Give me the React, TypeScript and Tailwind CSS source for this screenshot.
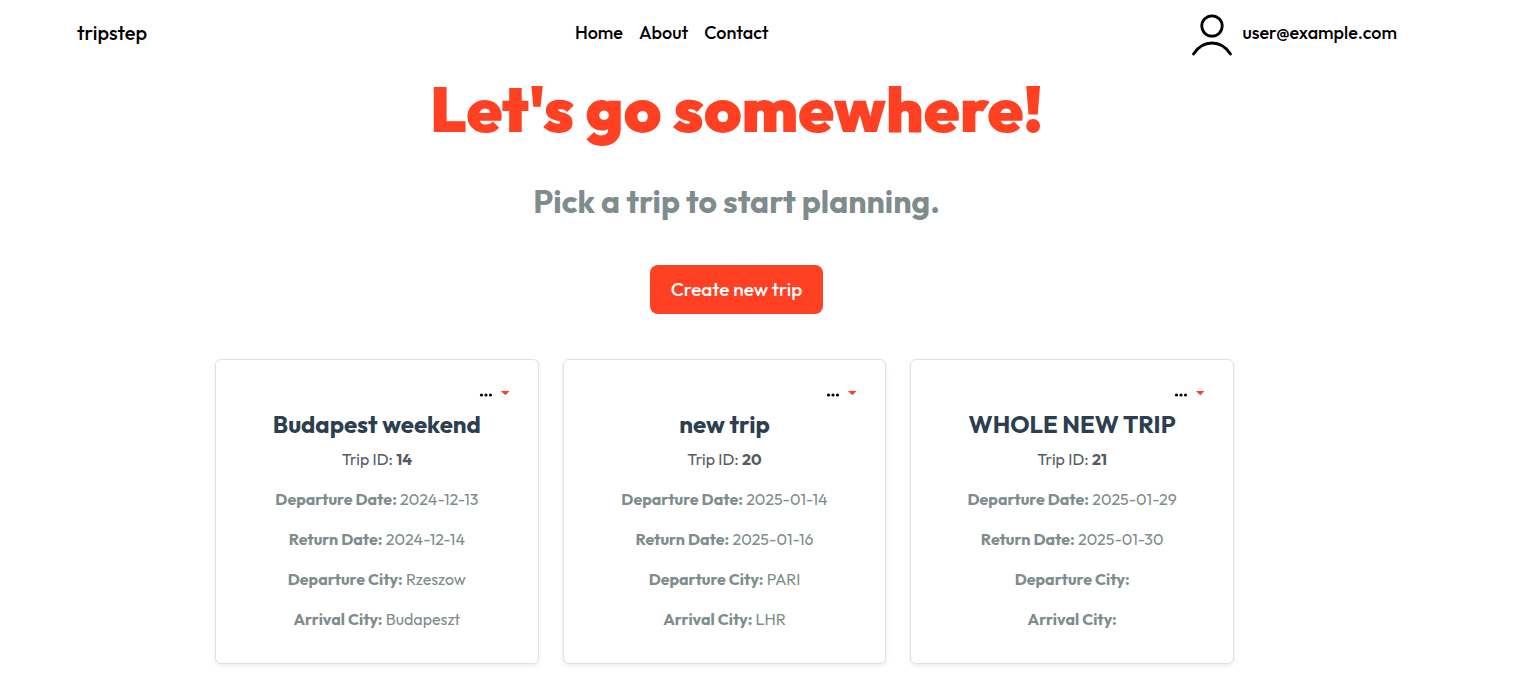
import React from "react";

type Trip = {
  id: number;
  name: string;
  departureDate: string;
  returnDate: string;
  departureCity: string;
  arrivalCity: string;
};

const trips: Trip[] = [
  { id: 14, name: "Budapest weekend", departureDate: "2024-12-13", returnDate: "2024-12-14", departureCity: "Rzeszow", arrivalCity: "Budapeszt" },
  { id: 20, name: "new trip", departureDate: "2025-01-14", returnDate: "2025-01-16", departureCity: "PARI", arrivalCity: "LHR" },
  { id: 21, name: "WHOLE NEW TRIP", departureDate: "2025-01-29", returnDate: "2025-01-30", departureCity: "", arrivalCity: "" },
];

function Detail({ label, value }: { label: string; value: string }) {
  return (
    <p className="mt-4 text-base leading-6 text-[#7f8c8d]">
      <strong className="font-bold">{label}:</strong> {value}
    </p>
  );
}

function TripCard({ trip }: { trip: Trip }) {
  return (
    <article className="rounded-md border border-[#dee2e6] bg-white px-4 pt-4 pb-8 text-center shadow-[0_2px_4px_rgba(0,0,0,0.075)]">
      <div className="flex h-8 justify-end pr-3">
        <button type="button" aria-label={`Options for ${trip.name}`} className="flex items-center gap-2 pt-0.5">
          <svg className="mt-1" width="14" height="4" viewBox="0 0 14 4" fill="#000">
            <circle cx="2.5" cy="2" r="1.6" />
            <circle cx="7" cy="2" r="1.6" />
            <circle cx="11.5" cy="2" r="1.6" />
          </svg>
          <svg width="9" height="5" viewBox="0 0 9 5" fill="#ff4023">
            <path d="M0 0h8.6L4.3 4.3z" />
          </svg>
        </button>
      </div>
      <h2 className="text-2xl leading-8 font-bold text-[#2c3e50]">{trip.name}</h2>
      <p className="mt-[7px] text-base leading-6 text-[#555b62]">
        Trip ID: <strong className="font-bold">{trip.id}</strong>
      </p>
      <Detail label="Departure Date" value={trip.departureDate} />
      <Detail label="Return Date" value={trip.returnDate} />
      <Detail label="Departure City" value={trip.departureCity} />
      <Detail label="Arrival City" value={trip.arrivalCity} />
    </article>
  );
}

export default function App() {
  return (
    <div className="min-h-screen bg-white font-['Outfit','Lato',sans-serif] text-black">
      <header className="flex h-[66px] items-center justify-between pr-32 pl-[77px] text-lg font-medium">
        <a href="#" className="pr-1 text-xl">tripstep</a>
        <nav className="flex gap-4">
          <a href="#">Home</a>
          <a href="#">About</a>
          <a href="#">Contact</a>
        </nav>
        <a href="#" className="flex items-center gap-2.5">
          <svg width="40" height="46" viewBox="0 0 40 46" fill="none" stroke="#000" strokeWidth="2.8" strokeLinecap="round">
            <circle cx="20" cy="16" r="10.2" />
            <path d="M1.5 44C11 29.3 29 29.3 38.5 44" />
          </svg>
          user@example.com
        </a>
      </header>
      <main className="pr-13 pb-3 text-center">
        <h1 className="text-[64px] leading-[86px] font-black text-[#ff4023]">Let's go somewhere!</h1>
        <p className="mt-6 text-[32px] leading-[50px] font-bold text-[#7f8c8d]">Pick a trip to start planning.</p>
        <button type="button" className="mt-[39px] h-[49px] rounded-lg bg-[#ff4023] px-[21px] text-[19px] font-medium text-white">Create new trip</button>
        <div className="mt-[45px] pr-6">
          <section className="mx-auto grid max-w-[1019px] grid-cols-3 gap-6">
            {trips.map((trip) => (
              <TripCard key={trip.id} trip={trip} />
            ))}
          </section>
        </div>
      </main>
    </div>
  );
}
